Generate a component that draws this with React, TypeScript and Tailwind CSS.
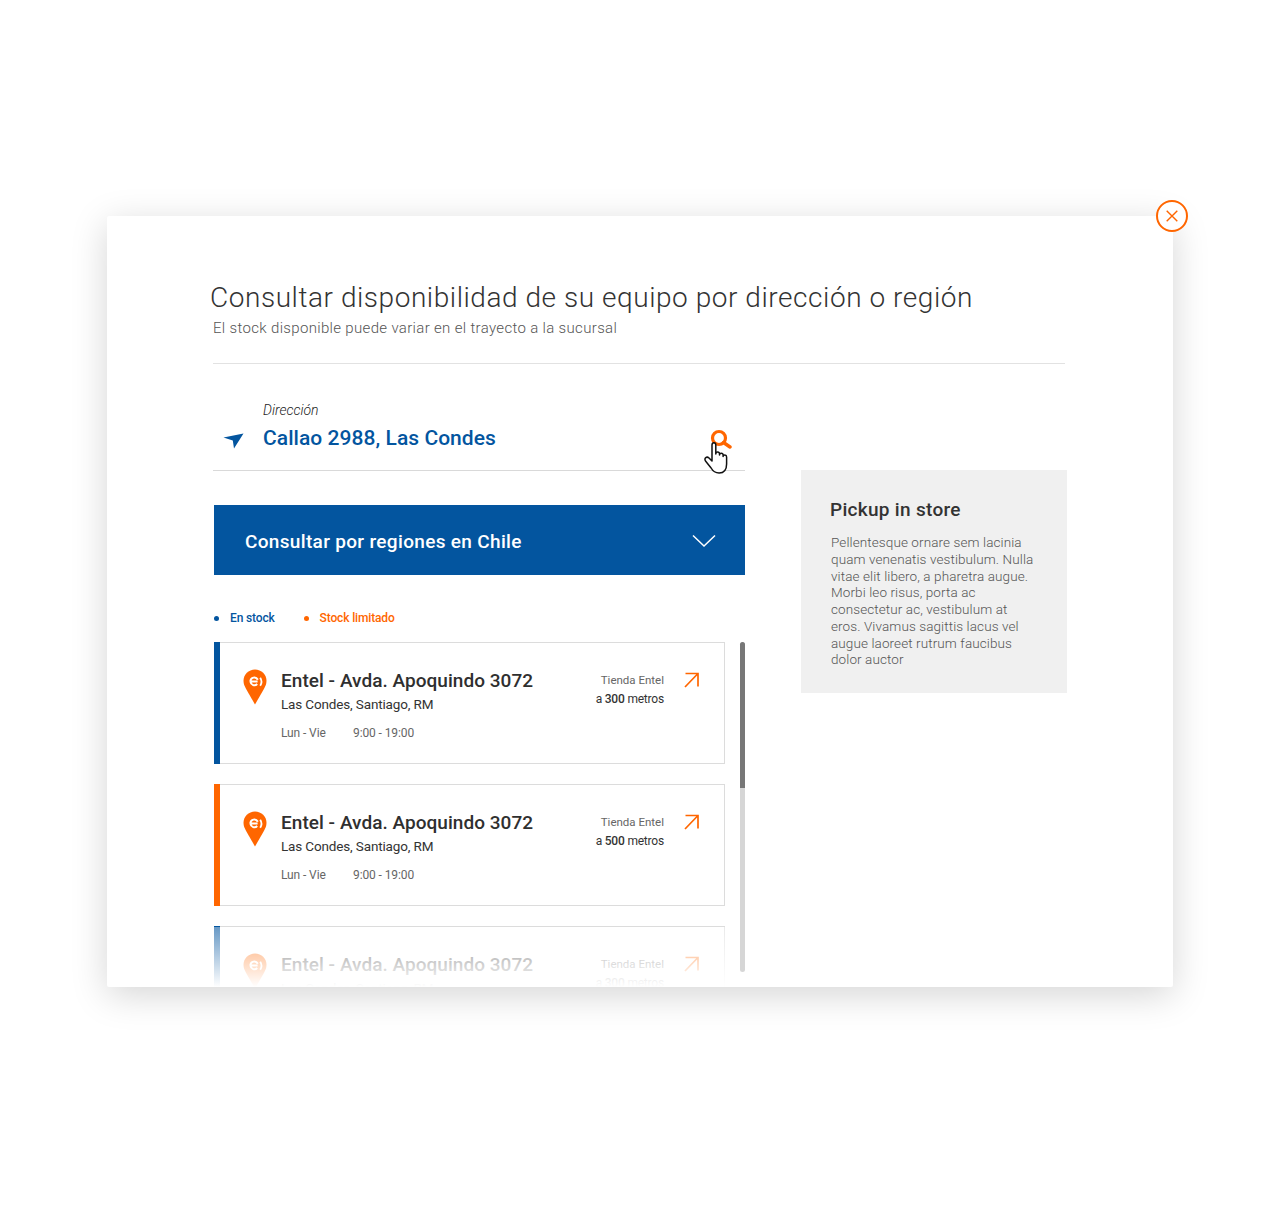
const font = { fontFamily: '"Roboto", "Liberation Sans", sans-serif' };

function Pin() {
  return (
    <svg width="24" height="36" viewBox="0 0 24 36" className="shrink-0">
      <path d="M12 .5C5.6.5.5 5.5.5 11.7c0 3 1 5.3 2.6 8.2L12 35.500l8.900-15.600c1.600-2.900 2.600-5.200 2.600-8.200C23.500 5.500 18.400.5 12 .5z" fill="#ff6600" />
      <path d="M14.600 12.500H7.300M7.300 12.500a4 4.300 0 0 1 7.500-1.700M7.400 12.700a4 4.300 0 0 0 6.800 2.300" fill="none" stroke="#fff" strokeWidth="2" />
      <path d="M17.200 8.800c1.500 2.300 1.500 5.700 0 8" fill="none" stroke="#fff" strokeWidth="1.800" />
    </svg>
  );
}

function Arrow() {
  return (
    <svg width="16" height="16" viewBox="0 0 16 16" className="shrink-0">
      <path d="M1.500 1.500H14V14.500M14 1.500L1 15" fill="none" stroke="#ff6600" strokeWidth="1.700" />
    </svg>
  );
}

function Card({ color, metres }: { color: string; metres: string }) {
  return (
    <div className={`flex h-[122px] w-[511px] shrink-0 border border-[#dcdcdc] border-l-0 ${color}`}>
      <div className={`w-[6px] shrink-0 -my-px ${color}`} />
      <div className="flex flex-1 bg-white pl-[23px] pt-[26px]">
        <Pin />
        <div className="ml-[14px] w-[300px]">
          <div className="text-[19px] leading-[24px] font-medium tracking-[0.04px] text-[#2f2f2f]">Entel - Avda. Apoquindo 3072</div>
          <div className="mt-[2px] text-[13.500px] leading-[18px] tracking-[-0.15px] text-[#333333]">Las Condes, Santiago, RM</div>
          <div className="mt-[12px] flex text-[12px] leading-[16px] tracking-[-0.1px] text-[#666666]">
            <span className="w-[72px]">Lun - Vie</span>
            <span>9:00 - 19:00</span>
          </div>
        </div>
        <div className="ml-[-10px] mt-[3px] w-[93px] text-right">
          <div className="text-[11.500px] leading-[16px] text-[#666666]">Tienda Entel</div>
          <div className="mt-[3px] text-[12px] leading-[16px] tracking-[-0.2px] text-[#333333]">
            a <b className="font-medium">{metres}</b> metros
          </div>
        </div>
        <div className="ml-[20px] mt-[3px]">
          <Arrow />
        </div>
      </div>
    </div>
  );
}

export default function App() {
  return (
    <div style={font} className="h-[1217px] w-[1280px] overflow-hidden bg-white pl-[107px] pt-[216px]">
      <div className="relative h-[771px] w-[1066px] rounded-[2px] bg-white shadow-[0_8px_36px_rgba(0,0,0,0.17)]">
        <button className="absolute right-[-15px] top-[-16px] flex h-[32px] w-[32px] items-center justify-center rounded-full border-2 border-[#ff6600] bg-white">
          <svg width="12" height="12" viewBox="0 0 12 12">
            <path d="M.7.7l10.600 10.600M11.300.7L.7 11.300" stroke="#ff6600" strokeWidth="1.400" fill="none" />
          </svg>
        </button>

        <div className="h-full overflow-hidden pl-[106px] pr-[106px] pt-[65px]">
          <h1 className="-ml-[3px] text-[28px] font-light leading-[34px] tracking-[0.55px] text-[#333333]">
            Consultar disponibilidad de su equipo por dirección o región
          </h1>
          <p className="mt-[3px] text-[15px] font-light leading-[20px] tracking-[0.33px] text-[#555555]">
            El stock disponible puede variar en el trayecto a la sucursal
          </p>
          <div className="mr-[2px] mt-[25px] h-px bg-[#e2e2e2]" />

          <div className="flex">
            <div className="relative w-[532px] shrink-0">
              <div className="mt-[37px] h-[70px] border-b border-[#d9d9d9] pl-[50px]">
                <div className="text-[14px] font-light italic leading-[18px] text-[#222222]">Dirección</div>
                <div className="mt-[5px] flex items-center">
                  <svg width="21" height="16" viewBox="0 0 21 16" className="-ml-[40px] mr-[19px] mt-[5px] shrink-0">
                    <path d="M.5 4.500L20.500.5 11 15.500 9.800 7.500z" fill="#03559f" />
                  </svg>
                  <span className="text-[21px] font-medium leading-[28px] tracking-[0.05px] text-[#03559f]">Callao 2988, Las Condes</span>
                  <div className="relative ml-auto mr-[13px] mt-[4px] h-[22px] w-[22px]">
                    <svg width="22" height="22" viewBox="0 0 22 22" className="absolute left-0 top-0">
                      <circle cx="9" cy="9" r="6.500" fill="none" stroke="#ff6600" strokeWidth="3.200" />
                      <path d="M13.500 13.500l6.500 4.500" stroke="#ff6600" strokeWidth="3.400" strokeLinecap="round" />
                    </svg>
                    <svg width="25" height="34" viewBox="0 0 25 34" className="absolute left-[-6px] top-[12px]">
                      <path d="M8 20V4c0-3 3.800-3 3.800 0v9c0-2.600 3.700-2.600 3.700 0v1c0-2.400 3.600-2.400 3.600 0v1.500c0-2 3.500-2 3.500.5v7c0 5.500-2.500 9-7.500 9-4 0-6-1.500-8-5L1.500 20c-1.700-3 1.300-5 3.500-3z" fill="#fff" stroke="#111" strokeWidth="1.500" strokeLinejoin="round" />
                    </svg>
                  </div>
                </div>
              </div>

              <div className="ml-px mt-[34px] flex h-[70px] items-center justify-between bg-[#03559f] pl-[31px] pr-[29px] pt-[4px]">
                <span className="text-[19px] font-medium tracking-[0.33px] text-white">Consultar por regiones en Chile</span>
                <svg width="24" height="14" viewBox="0 0 24 14" className="-mt-[2px]">
                  <path d="M1 1.500l11 10.500L23 1.500" fill="none" stroke="#fff" strokeWidth="1.500" />
                </svg>
              </div>

              <div className="ml-px mt-[35px] flex h-[16px] items-center text-[12px] font-medium tracking-[-0.15px]">
                <span className="h-[5px] w-[5px] rounded-full bg-[#03559f]" />
                <span className="ml-[11px] text-[#03559f]">En stock</span>
                <span className="ml-[29px] h-[5px] w-[5px] rounded-full bg-[#ff6600]" />
                <span className="ml-[11px] text-[#ff6600]">Stock limitado</span>
              </div>

              <div className="relative ml-px mt-[16px] h-[345px] overflow-hidden">
                <div className="flex flex-col gap-[20px]">
                  <Card color="bg-[#03559f]" metres="300" />
                  <Card color="bg-[#ff6600]" metres="500" />
                  <Card color="bg-[#03559f]" metres="300" />
                </div>
                <div className="absolute bottom-0 left-0 right-0 h-[60px] bg-gradient-to-b from-white/40 to-white" />
                <div className="absolute right-0 top-0 h-[330px] w-[5px] rounded-full bg-[#d6d6d6]">
                  <div className="h-[146px] rounded-t-full bg-[#777777]" />
                </div>
              </div>
            </div>

            <aside className="ml-[56px] mt-[106px] h-[223px] w-[266px] bg-[#f0f0f0] pl-[29px] pr-[31px] pt-[28px]">
              <h2 className="text-[19px] font-medium leading-[24px] tracking-[0.3px] text-[#333333]">Pickup in store</h2>
              <p className="ml-px mt-[12px] text-[13.500px] font-light leading-[16.750px] tracking-[0.1px] text-[#555555]">
                Pellentesque ornare sem lacinia quam venenatis vestibulum. Nulla vitae elit libero, a pharetra augue. Morbi leo risus, porta ac consectetur ac, vestibulum at eros. Vivamus sagittis lacus vel augue laoreet rutrum faucibus dolor auctor
              </p>
            </aside>
          </div>
        </div>
      </div>
    </div>
  );
}
